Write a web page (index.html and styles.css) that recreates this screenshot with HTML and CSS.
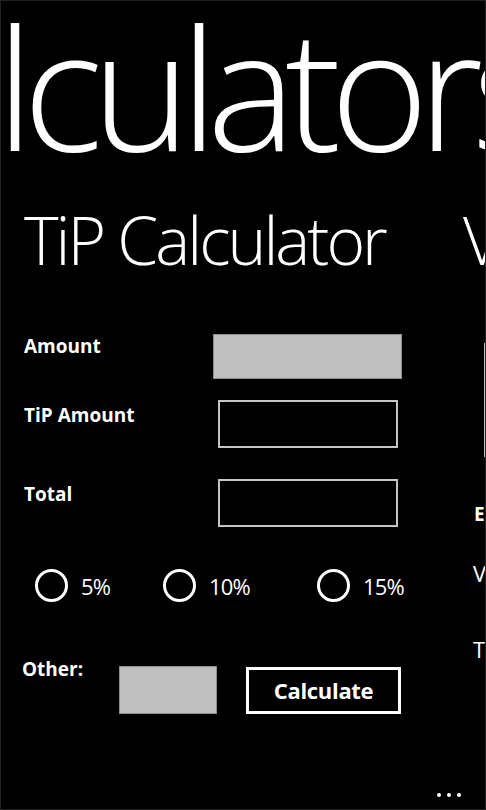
FILE: index.html
```html
<!DOCTYPE html>
<html lang="en">
<head>
<meta charset="utf-8">
<title>Calculators</title>
<link rel="stylesheet" href="styles.css">
</head>
<body>
<div class="phone">
  <div class="pano-title">lculators</div>
  <div class="pano-items">
    <section class="item item-tip">
      <h2 class="item-header">TiP Calculator</h2>
      <div class="row row-amount">
        <label class="lbl lbl-first">Amount</label>
        <div class="input-fill input-wide"></div>
      </div>
      <div class="row row-tip">
        <label class="lbl">TiP Amount</label>
        <div class="input-out"></div>
      </div>
      <div class="row row-total">
        <label class="lbl">Total</label>
        <div class="input-out"></div>
      </div>
      <div class="radios">
        <div class="radio"><span class="circle"></span><span class="radio-text">5%</span></div>
        <div class="radio"><span class="circle"></span><span class="radio-text">10%</span></div>
        <div class="radio"><span class="circle"></span><span class="radio-text">15%</span></div>
      </div>
      <div class="row row-other">
        <label class="lbl lbl-first">Other:</label>
        <div class="input-fill input-small"></div>
        <button class="btn" type="button">Calculate</button>
      </div>
    </section>
    <section class="item item-vat">
      <h2 class="item-header">VAT Calculator</h2>
      <div class="vat-box"></div>
      <div class="vat-lbl-bold">Enter Amount</div>
      <div class="vat-lbl vat-lbl-v">VAT</div>
      <div class="vat-lbl vat-lbl-t">Total</div>
    </section>
  </div>
  <div class="appbar-dots"><span></span><span></span><span></span></div>
</div>
</body>
</html>
```

FILE: styles.css
```css
* { box-sizing: border-box; }
html, body { margin: 0; padding: 0; background: #000; }
body { font-family: "Open Sans", "DejaVu Sans", sans-serif; color: #fff; }

.phone {
  position: relative;
  width: 486px;
  height: 810px;
  border: 1px solid #222;
  overflow: hidden;
  background: #000;
}

.pano-title {
  font-size: 168px;
  font-weight: 300;
  line-height: 168px;
  height: 168px;
  margin-top: 1px;
  margin-left: -5px;
  white-space: nowrap;
  letter-spacing: -11px;
}

.pano-items {
  display: flex;
  width: 2000px;
  margin-top: 36px;
}

.item { flex: 0 0 438px; padding-left: 23px; }

.item-header {
  margin: 0;
  font-size: 66px;
  font-weight: 300;
  line-height: 66px;
  height: 66px;
  white-space: nowrap;
  letter-spacing: -3px;
}

.row { display: flex; align-items: flex-start; }
.row-amount { margin-top: 62px; height: 45px; }
.row-tip { margin-top: 21px; height: 48px; }
.row-total { margin-top: 31px; height: 48px; }

.lbl {
  display: block;
  width: 189px;
  font-size: 19px;
  font-weight: 700;
  line-height: 24px;
  padding-top: 3px;
}
.lbl-first { padding-top: 0; }

.input-fill {
  background: #bfbfbf;
  border: 1px solid #8c8c8c;
}
.input-wide { width: 189px; height: 45px; }

.input-out {
  margin-left: 5px;
  width: 180px;
  height: 48px;
  border: 2px solid #c4c4c4;
  background: #000;
}

.radios {
  display: grid;
  grid-template-columns: 128px 154px auto;
  margin-top: 42px;
  margin-left: 11px;
}
.radio { display: flex; align-items: center; height: 33px; }
.circle {
  width: 33px;
  height: 33px;
  border: 3px solid #fff;
  border-radius: 50%;
  flex: 0 0 33px;
}
.radio-text {
  margin-left: 13px;
  font-size: 22px;
  line-height: 30px;
  font-weight: 400;
  letter-spacing: -0.8px;
}

.row-other { margin-top: 55px; }
.row-other .lbl { width: 97px; margin-left: -2px; }
.input-small { width: 98px; height: 48px; margin-top: 9px; }
.btn {
  margin: 10px 0 0 29px;
  width: 155px;
  height: 47px;
  border: 3px solid #fff;
  background: #000;
  color: #fff;
  font-family: inherit;
  font-size: 22px;
  font-weight: 700;
  line-height: 39px;
  padding: 0;
  letter-spacing: -0.3px;
}

.item-vat { padding-left: 24px; }
.vat-box {
  margin-top: 71px;
  margin-left: 21px;
  width: 200px;
  height: 114px;
  border: 2px solid #c4c4c4;
}
.vat-lbl-bold {
  margin-top: 45px;
  margin-left: 11px;
  font-size: 19px;
  font-weight: 700;
  line-height: 24px;
}
.vat-lbl {
  margin-left: 10px;
  font-size: 22px;
  line-height: 30px;
}
.vat-lbl-v { margin-top: 32px; }
.vat-lbl-t { margin-top: 46px; }

.appbar-dots {
  position: absolute;
  right: 24px;
  bottom: 12px;
  display: flex;
  gap: 6px;
}
.appbar-dots span {
  width: 4px;
  height: 4px;
  border-radius: 50%;
  background: #fff;
}
```
